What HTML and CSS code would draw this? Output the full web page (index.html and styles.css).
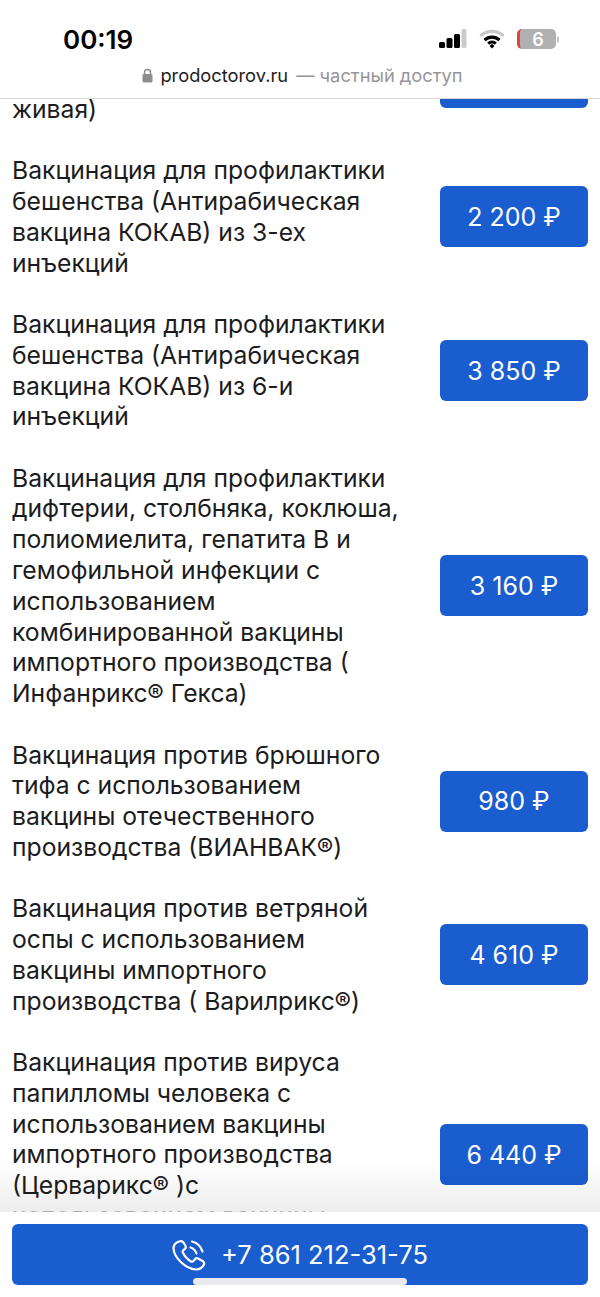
FILE: index.html
```html
<!DOCTYPE html>
<html lang="ru">
<head>
<meta charset="utf-8">
<title>prodoctorov.ru</title>
<link rel="stylesheet" href="styles.css">
</head>
<body>
<div class="screen">
  <header class="top">
    <div class="status">
      <span class="time">00:19</span>
      <div class="status-icons">
        <svg class="signal" width="29" height="20" viewBox="0 0 29 20">
          <rect x="0" y="13" width="6" height="6" rx="1.5" fill="#000"/>
          <rect x="7.5" y="9" width="6" height="10" rx="1.5" fill="#000"/>
          <rect x="15" y="5" width="6" height="14" rx="1.5" fill="#000"/>
          <rect x="22.5" y="0" width="5" height="19" rx="1.5" fill="#ccc"/>
        </svg>
        <svg class="wifi" width="26" height="20" viewBox="0 0 26 20">
          <path d="M1.5 7 A16.5 16.5 0 0 1 24.5 7" fill="none" stroke="#c8c8c8" stroke-width="3.4"/>
          <path d="M5.5 11 A11 11 0 0 1 20.5 11" fill="none" stroke="#000" stroke-width="3.2"/>
          <path d="M9.2 14.6 A5.6 5.6 0 0 1 16.8 14.6" fill="none" stroke="#000" stroke-width="3"/>
          <path d="M10.5 17 L13 14.8 L15.5 17 L13 19.6 Z" fill="#000"/>
        </svg>
        <div class="battery"><span class="battery-level">6</span></div>
        <span class="battery-cap"></span>
      </div>
    </div>
    <div class="address">
      <svg class="lock" width="11" height="15" viewBox="0 0 11 15">
        <path d="M2.5 7 V4.5 a3 3 0 0 1 6 0 V7" fill="none" stroke="#8e8e8e" stroke-width="1.5"/>
        <rect x="0.5" y="6" width="10" height="8.5" rx="1.5" fill="#8e8e8e"/>
      </svg>
      <span class="domain">prodoctorov.ru</span>
      <span class="private">— частный доступ</span>
    </div>
  </header>

  <main class="list">
    <div class="row row-cut">
      <p class="name">живая)</p>
      <a class="price"></a>
    </div>
    <div class="row">
      <p class="name">Вакцинация для профилактики бешенства (Антирабическая вакцина КОКАВ) из 3-ех инъекций</p>
      <a class="price">2 200 ₽</a>
    </div>
    <div class="row">
      <p class="name">Вакцинация для профилактики бешенства (Антирабическая вакцина КОКАВ) из 6-и инъекций</p>
      <a class="price">3 850 ₽</a>
    </div>
    <div class="row">
      <p class="name">Вакцинация для профилактики дифтерии, столбняка, коклюша, полиомиелита, гепатита В и гемофильной инфекции с использованием комбинированной вакцины импортного производства ( Инфанрикс® Гекса)</p>
      <a class="price">3 160 ₽</a>
    </div>
    <div class="row">
      <p class="name">Вакцинация против брюшного тифа с использованием вакцины отечественного производства (ВИАНВАК®)</p>
      <a class="price">980 ₽</a>
    </div>
    <div class="row">
      <p class="name">Вакцинация против ветряной оспы с использованием вакцины импортного производства ( Варилрикс®)</p>
      <a class="price">4 610 ₽</a>
    </div>
    <div class="row row-long">
      <p class="name">Вакцинация против вируса папилломы человека с использованием вакцины импортного производства (Церварикс® )с <span class="cut-line">использованием вакцины</span></p>
      <a class="price">6 440 ₽</a>
    </div>
    <div class="fade"></div>
  </main>

  <footer class="bottom">
    <a class="call">
      <svg class="phone" width="34" height="32" viewBox="0 0 34 32" fill="none" stroke="#fff" stroke-width="2.2" stroke-linecap="round" stroke-linejoin="round">
        <path d="M7 2.5 C4 3.5 1.5 6 1.5 9.5 C2 18 13 30 24 30.5 C27.5 30.5 30.5 28.5 32 25.5 C32.5 24 32 23 31 22.3 L26 19.5 C24.8 19 23.8 19.2 23 20.2 L21.5 22 C20.7 22.8 19.8 23 18.8 22.4 C15.5 20.5 12.5 17 10.8 13.6 C10.3 12.6 10.6 11.8 11.4 11.2 L13 9.8 C13.9 9 14 8 13.6 7 L11.2 3.2 C10 2 8.6 2 7 2.5 Z"/>
        <path d="M18.5 8.5 C21.5 9.5 23.5 11.5 24.5 14.5"/>
        <path d="M20 2.5 C25 3.8 29 7.5 30.5 12.5"/>
      </svg>
      <span>+7 861 212-31-75</span>
    </a>
    <div class="home-bar"></div>
  </footer>
</div>
</body>
</html>
```

FILE: styles.css
```css
* {
  box-sizing: border-box;
}

html, body {
  margin: 0;
  padding: 0;
  background: #fff;
}

body {
  font-family: Inter, "Liberation Sans", sans-serif;
  color: #1c1c1e;
}

.screen {
  width: 600px;
  height: 1297px;
  display: flex;
  flex-direction: column;
  overflow: hidden;
  position: relative;
}

/* status bar + address */
.top {
  height: 99px;
  flex: none;
  background: #fff;
  border-bottom: 1px solid #d6d6d8;
  position: relative;
  z-index: 2;
}

.status {
  display: flex;
  justify-content: space-between;
  align-items: center;
  height: 58px;
  padding: 20px 41px 0 63px;
}

.time {
  font-size: 26px;
  font-weight: 600;
  color: #000;
}

.status-icons {
  display: flex;
  align-items: center;
}

.signal {
  margin-right: 11px;
}

.wifi {
  margin-right: 12px;
}

.battery {
  width: 39px;
  height: 20px;
  background: #b0b0b0;
  border-left: 3px solid #e0433a;
  border-radius: 5px;
  display: flex;
  align-items: center;
  justify-content: center;
}

.battery-level {
  color: #fff;
  font-size: 18px;
  font-weight: 600;
}

.battery-cap {
  width: 2px;
  height: 7px;
  margin-left: 1px;
  background: #c4c4c4;
  border-radius: 0 2px 2px 0;
}

.address {
  display: flex;
  align-items: center;
  justify-content: center;
  margin-top: 6px;
  font-size: 18.3px;
  padding-left: 5px;
}

.lock {
  margin-right: 7px;
}

.domain {
  color: #1c1c1e;
}

.private {
  color: #96969a;
  margin-left: 8px;
}

/* price list */
.list {
  flex: 1;
  min-height: 0;
  overflow: hidden;
  position: relative;
  padding: 0 12px;
  display: flex;
  flex-direction: column;
  gap: 30.5px;
}

.row {
  flex: none;
  display: flex;
  align-items: center;
  justify-content: space-between;
}

.row-cut {
  align-items: flex-start;
  margin-top: -5px;
}

.row-cut .price {
  margin-top: -47px;
}

/* 7 lines tall, the rest of the text is under the call bar */
.row-long {
  min-height: 215.6px;
  align-items: flex-start;
}

.row-long .price {
  align-self: center;
}

.cut-line {
  opacity: 0.3;
}

.name {
  margin: 0;
  width: 392px;
  font-size: 24.7px;
  line-height: 30.8px;
}

.price {
  flex: none;
  width: 148px;
  height: 61px;
  background: #1a5dcf;
  border-radius: 6px;
  color: #fff;
  font-size: 25px;
  display: flex;
  align-items: center;
  justify-content: center;
}

.fade {
  position: absolute;
  left: 0;
  right: 0;
  bottom: 0;
  height: 52px;
  background: linear-gradient(rgba(0, 0, 0, 0), rgba(0, 0, 0, 0.07));
}

/* call button */
.bottom {
  flex: none;
  height: 85px;
  background: #fff;
  padding: 12px 12px 0;
  position: relative;
}

.call {
  height: 61px;
  background: #1a5dcf;
  border-radius: 6px;
  color: #fff;
  font-size: 25.5px;
  display: flex;
  align-items: center;
  justify-content: center;
  gap: 15px;
}

.home-bar {
  position: absolute;
  left: 193px;
  top: 66px;
  width: 214px;
  height: 7px;
  background: #e9e9ee;
  border-radius: 4px;
}
```
